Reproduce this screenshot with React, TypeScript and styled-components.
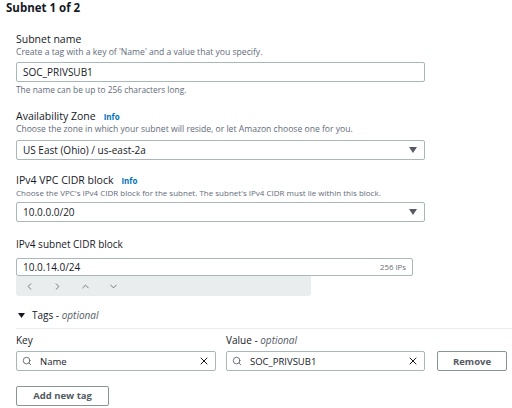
import styled, { createGlobalStyle } from 'styled-components';
import { ChevronLeft, ChevronRight, ChevronUp, ChevronDown, Search, X } from 'lucide-react';

const Global = createGlobalStyle`
  html, body {
    margin: 0;
    padding: 0;
    background: #ffffff;
  }
  body {
    font-family: "Open Sans", "Liberation Sans", sans-serif;
    color: #16191f;
    width: 512px;
    height: 408px;
    overflow: hidden;
  }
`;

const Page = styled.div`
  display: flex;
  flex-direction: column;
  padding-left: 6px;
`;

const Title = styled.h2`
  margin: 0;
  font-size: 11.5px;
  font-weight: 700;
  line-height: 16px;
`;

const Body = styled.div`
  display: flex;
  flex-direction: column;
  padding-left: 10px;
`;

const Field = styled.div<{ $top: number }>`
  display: flex;
  flex-direction: column;
  margin-top: ${(p) => p.$top}px;
`;

const Label = styled.div<{ $size?: number }>`
  display: flex;
  align-items: baseline;
  gap: 8px;
  font-size: ${(p) => p.$size ?? 10.5}px;
  line-height: 13px;
`;

const Info = styled.span`
  color: #0073bb;
  font-size: 8px;
  font-weight: 700;
`;

const Desc = styled.div<{ $size?: number }>`
  font-size: ${(p) => p.$size ?? 8.6}px;
  line-height: 12px;
  color: #5f6b7a;
`;

const Box = styled.div<{ $width: number; $height?: number; $top?: number }>`
  box-sizing: border-box;
  display: flex;
  align-items: center;
  width: ${(p) => p.$width}px;
  height: ${(p) => p.$height ?? 20}px;
  margin-top: ${(p) => p.$top ?? 0}px;
  border: 1px solid #aab7b8;
  border-radius: 2px;
  padding: 0 6px;
  font-size: 10px;
  background: #ffffff;
`;

const Value = styled.span`
  flex: 1;
  white-space: nowrap;
`;

const Count = styled.span`
  font-size: 7.8px;
  color: #687078;
`;

const Caret = styled.svg`
  width: 8px;
  height: 6px;
  margin-right: 1px;
`;

const Hint = styled.div`
  margin-top: 2px;
  font-size: 8.4px;
  line-height: 12px;
  color: #5f6b7a;
`;

const Stepper = styled.div`
  display: flex;
  align-items: center;
  width: 295px;
  height: 20px;
  box-sizing: border-box;
  background: #eaeded;
  border-radius: 0 0 3px 3px;
  padding-left: 8px;
  gap: 17px;
  color: #414750;
`;

const TagsHeader = styled.div`
  display: flex;
  align-items: center;
  gap: 7px;
  margin-top: 12px;
  padding: 0 0 6px 2px;
  font-size: 10px;
  line-height: 14px;
  border-bottom: 1px solid #eaeded;
`;

const Opt = styled.em`
  font-style: italic;
  color: #545b64;
`;

const TagGrid = styled.div`
  display: grid;
  grid-template-columns: 200px 199px 71px;
  column-gap: 10px;
  row-gap: 4px;
  margin-top: 5px;
  align-items: center;
`;

const ColHead = styled.div`
  font-size: 10px;
  line-height: 13px;
`;

const SearchBox = styled(Box)`
  padding: 0 5px 0 5px;
  gap: 8px;
  font-size: 9.5px;
`;

const Button = styled.button<{ $width: number }>`
  box-sizing: border-box;
  width: ${(p) => p.$width}px;
  height: 20px;
  border: 1px solid #879596;
  border-radius: 2px;
  background: #ffffff;
  font-family: inherit;
  font-size: 9.5px;
  font-weight: 700;
  color: #545b64;
  padding: 0;
`;

const RemoveButton = styled(Button)`
  margin-left: 2px;
`;

const AddRow = styled.div`
  margin-top: 11px;
`;

function Triangle() {
  return (
    <Caret viewBox="0 0 8 6">
      <polygon points="0,0 8,0 4,6" fill="#545b64" />
    </Caret>
  );
}

export default function App() {
  return (
    <>
      <Global />
      <Page>
        <Title>Subnet 1 of 2</Title>
        <Body>
          <Field $top={17}>
            <Label>Subnet name</Label>
            <Desc>Create a tag with a key of 'Name' and a value that you specify.</Desc>
            <Box $width={409} $top={4}>
              <Value>SOC_PRIVSUB1</Value>
            </Box>
            <Hint>The name can be up to 256 characters long.</Hint>
          </Field>

          <Field $top={14}>
            <Label>
              Availability Zone <Info>Info</Info>
            </Label>
            <Desc>Choose the zone in which your subnet will reside, or let Amazon choose one for you.</Desc>
            <Box $width={409} $top={5}>
              <Value>US East (Ohio) / us-east-2a</Value>
              <Triangle />
            </Box>
          </Field>

          <Field $top={14}>
            <Label>
              IPv4 VPC CIDR block <Info>Info</Info>
            </Label>
            <Desc $size={8}>Choose the VPC's IPv4 CIDR block for the subnet. The subnet's IPv4 CIDR must lie within this block.</Desc>
            <Box $width={409} $top={3}>
              <Value>10.0.0.0/20</Value>
              <Triangle />
            </Box>
          </Field>

          <Field $top={16}>
            <Label $size={10}>IPv4 subnet CIDR block</Label>
            <Box $width={397} $height={18} $top={7}>
              <Value>10.0.14.0/24</Value>
              <Count>256 IPs</Count>
            </Box>
            <Stepper>
              <ChevronLeft size={11} strokeWidth={1.5} />
              <ChevronRight size={11} strokeWidth={1.5} />
              <ChevronUp size={11} strokeWidth={1.5} />
              <ChevronDown size={11} strokeWidth={1.5} />
            </Stepper>
          </Field>

          <TagsHeader>
            <svg width="7" height="5" viewBox="0 0 7 5">
              <polygon points="0,0 7,0 3.5,5" fill="#16191f" />
            </svg>
            <span>
              Tags - <Opt>optional</Opt>
            </span>
          </TagsHeader>

          <TagGrid>
            <ColHead>Key</ColHead>
            <ColHead>
              Value - <Opt>optional</Opt>
            </ColHead>
            <span />
            <SearchBox $width={200}>
              <Search size={10} strokeWidth={2} color="#545b64" />
              <Value>Name</Value>
              <X size={12} strokeWidth={2} color="#16191f" />
            </SearchBox>
            <SearchBox $width={199}>
              <Search size={10} strokeWidth={2} color="#545b64" />
              <Value>SOC_PRIVSUB1</Value>
              <X size={12} strokeWidth={2} color="#16191f" />
            </SearchBox>
            <RemoveButton $width={70}>Remove</RemoveButton>
          </TagGrid>

          <AddRow>
            <Button $width={93}>Add new tag</Button>
          </AddRow>
        </Body>
      </Page>
    </>
  );
}
